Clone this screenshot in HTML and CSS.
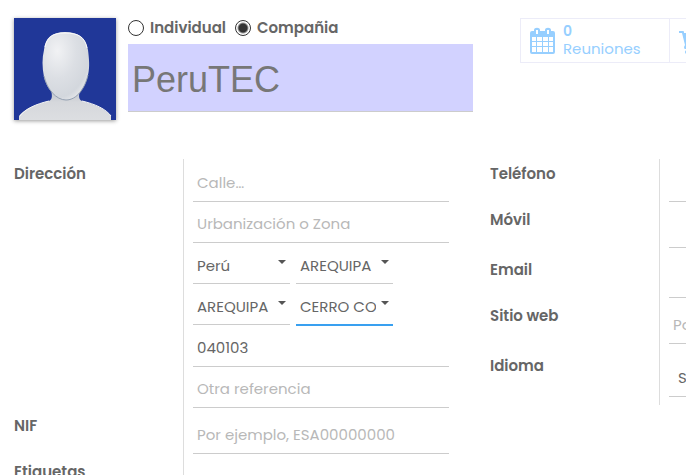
FILE: index.html
```html
<!DOCTYPE html>
<html lang="es">
<head>
<meta charset="utf-8">
<title>PeruTEC</title>
<link rel="stylesheet" href="styles.css">
</head>
<body>
<main class="sheet">
  <header class="header">
    <svg class="avatar" viewBox="0 0 102 102" role="img" aria-label="Foto">
      <defs>
        <radialGradient id="face" cx=".32" cy=".28" r=".8">
          <stop offset="0" stop-color="#f1f2f4"/>
          <stop offset=".5" stop-color="#dcdfe4"/>
          <stop offset=".85" stop-color="#d3d7dd"/>
          <stop offset="1" stop-color="#e6e8eb"/>
        </radialGradient>
        <linearGradient id="body" x1="0" y1="0" x2="0" y2="1">
          <stop offset="0" stop-color="#bcc1c9"/>
          <stop offset=".45" stop-color="#d6d8dc"/>
          <stop offset="1" stop-color="#dcdee1"/>
        </linearGradient>
      </defs>
      <rect width="102" height="102" fill="#203798"/>
      <path d="M37 70L66 70C65 78 64 81 68 83C80 86 92 91 97 98L97 102L5 102L5 98C10 91 22 86 35 83C39 81 38 78 37 70Z" fill="url(#body)"/>
      <path d="M6 98C11 91 22 86 35 83M68 83C81 86 92 91 97 98" fill="none" stroke="#f4f5f6" stroke-width="1"/>
      <path d="M51 14C65 14 72 20 74 32C75 40 76 49 74 57C71 70 63 82 52 82C42 82 33 71 30 59C28 49 28 40 30 32C31 20 38 14 51 14Z" fill="url(#face)"/>
      <path d="M30 58C33 71 42 82 52 82C63 82 71 70 74 57" fill="none" stroke="#94a0b1" stroke-width="1"/>
      <path d="M31 29C33 19 39 15 51 15C64 15 71 19 73 30" fill="none" stroke="#fafafa" stroke-width="1"/>
    </svg>
    <div class="identity">
      <div class="kinds">
        <label class="kind"><input type="radio" name="kind">Individual</label>
        <label class="kind"><input type="radio" name="kind" checked>Compañia</label>
      </div>
      <input class="name" type="text" value="PeruTEC" aria-label="Nombre">
    </div>
    <div class="stats">
      <button class="stat" type="button">
        <svg class="stat-icon" viewBox="0 0 25 28" aria-hidden="true">
          <path fill="#97cfff" fill-rule="evenodd" d="M2 4H4V3C4 0 10 0 10 3V4H15V3C15 0 21 0 21 3V4H23Q25 4 25 6V25Q25 27 23 27H2Q0 27 0 25V6Q0 4 2 4ZM2 10V14H6V10ZM7 10V14H12V10ZM13 10V14H18V10ZM19 10V14H23V10ZM2 15V19H6V15ZM7 15V19H12V15ZM13 15V19H18V15ZM19 15V19H23V15ZM2 20V25H6V20ZM7 20V25H12V20ZM13 20V25H18V20ZM19 20V25H23V20ZM6 3V7H8V3ZM17 3V7H19V3Z"/>
        </svg>
        <span class="stat-text"><strong>0</strong><span>Reuniones</span></span>
      </button>
      <button class="stat" type="button" aria-label="Ventas">
        <svg class="stat-icon" viewBox="0 0 25 28" aria-hidden="true">
          <path d="M0 4H4Q5 4 5 5L5 6H25V16L8 18L8 20H23V22H6Q5 22 5 20L6 18L3 6H0Z" fill="#97cfff"/>
          <circle cx="8" cy="25" r="2" fill="#97cfff"/><circle cx="21" cy="25" r="2" fill="#97cfff"/>
        </svg>
      </button>
    </div>
  </header>

  <div class="groups">
    <section class="group">
      <div class="row">
        <label class="label" for="street">Dirección</label>
        <div class="cell address">
          <input class="field" id="street" type="text" placeholder="Calle…">
          <input class="field" type="text" placeholder="Urbanización o Zona" aria-label="Urbanización o Zona">
          <div class="pair">
            <select class="field" aria-label="País"><option>Perú</option></select>
            <select class="field" aria-label="Departamento"><option>AREQUIPA</option></select>
          </div>
          <div class="pair">
            <select class="field" aria-label="Provincia"><option>AREQUIPA</option></select>
            <select class="field active" aria-label="Distrito"><option>CERRO COLORADO</option></select>
          </div>
          <input class="field" type="text" value="040103" aria-label="Código postal">
          <input class="field" type="text" placeholder="Otra referencia" aria-label="Otra referencia">
        </div>
      </div>
      <div class="row">
        <label class="label" for="nif">NIF</label>
        <div class="cell"><input class="field" id="nif" type="text" placeholder="Por ejemplo, ESA00000000"></div>
      </div>
      <div class="row">
        <label class="label" for="tags">Etiquetas</label>
        <div class="cell"><input class="field" id="tags" type="text"></div>
      </div>
    </section>
    <section class="group">
      <div class="row">
        <label class="label" for="phone">Teléfono</label>
        <div class="cell"><input class="field" id="phone" type="tel"></div>
      </div>
      <div class="row tall">
        <label class="label" for="mobile">Móvil</label>
        <div class="cell"><input class="field" id="mobile" type="tel"></div>
      </div>
      <div class="row">
        <label class="label" for="email">Email</label>
        <div class="cell"><input class="field" id="email" type="email"></div>
      </div>
      <div class="row tall">
        <label class="label" for="web">Sitio web</label>
        <div class="cell"><input class="field" id="web" type="url" placeholder="Por ejemplo, www.odoo.com"></div>
      </div>
      <div class="row last">
        <label class="label" for="lang">Idioma</label>
        <div class="cell"><select class="field language" id="lang"><option>Spanish / Español</option></select></div>
      </div>
    </section>
  </div>
</main>
</body>
</html>
```
FILE: styles.css
```css
* { box-sizing: border-box; }

body {
  margin: 0;
  overflow: hidden;
  background: #fff;
  color: #666;
  font: 15px/20px Poppins, Inter, sans-serif;
}

input, select, button { font: inherit; color: inherit; }

.sheet { min-width: 939px; padding: 18px 14px; }

.header { display: flex; align-items: flex-start; gap: 12px; }

.avatar {
  width: 102px;
  height: 102px;
  box-shadow: 0 1px 4px rgba(0, 0, 0, .4);
}

.identity { width: 345px; }

.kinds { display: flex; gap: 9px; margin-bottom: 6px; }

.kind { display: flex; align-items: center; gap: 6px; font-weight: 600; }

.kind input {
  appearance: none;
  width: 16px;
  height: 16px;
  margin: 0;
  border: 1px solid #333;
  border-radius: 50%;
}

.kind input:checked {
  background: radial-gradient(circle, #333 0 4px, #fff 6px);
}

.name {
  display: block;
  width: 100%;
  height: 68px;
  padding: 4px 4px 0;
  border: 0;
  border-bottom: 1px solid #ccc;
  background: #d2d2ff;
  color: #777;
  font: 36px/40px "Liberation Sans", Arial, sans-serif;
}

.stats {
  display: flex;
  flex: 1;
  margin-left: 35px;
  border: 1px solid #ececf8;
}

.stat {
  display: flex;
  align-items: center;
  gap: 8px;
  width: 149px;
  height: 43px;
  padding: 0 9px;
  border: 0;
  border-right: 1px solid #ececf8;
  background: #fff;
  color: #97cfff;
  text-align: left;
}

.stat-icon { width: 25px; height: 28px; }

.stat-text { display: grid; padding-bottom: 2px; line-height: 17px; }

.stat-text strong { font-size: 14px; font-weight: 600; }

.groups {
  display: grid;
  grid-template-columns: 1fr 1fr;
  gap: 41px;
  align-items: start;
  margin-top: 39px;
}

.row {
  display: grid;
  grid-template-columns: 169px 1fr;
  min-height: 46px;
}

.tall { min-height: 50px; }

.last { min-height: 54px; }

.label { padding-top: 5px; font-weight: 600; }

.cell {
  padding: 2px 0 0 9px;
  border-left: 1px solid #ddd;
}

.address { padding-bottom: 3px; }

.pair {
  display: grid;
  grid-template-columns: 97px 97px;
  gap: 6px;
  align-items: start;
}

.field {
  display: block;
  width: 100%;
  height: 41px;
  padding: 3px 4px 0;
  border: 0;
  border-bottom: 1px solid #ccc;
  border-radius: 0;
  outline: 0;
  background: transparent;
}

.field::placeholder { color: #b8b8b8; opacity: 1; }

select.field {
  appearance: none;
  padding: 6px 17px 0 4px;
  background: url("data:image/svg+xml,%3Csvg xmlns='http://www.w3.org/2000/svg' width='8' height='4'%3E%3Cpath d='M0 0H8L4 4Z' fill='%23555'/%3E%3C/svg%3E") no-repeat right 4px top 17px;
}

select.active { height: 42px; border-bottom: 2px solid #39a0f0; }

select.language { height: 44px; padding-left: 9px; }
```
